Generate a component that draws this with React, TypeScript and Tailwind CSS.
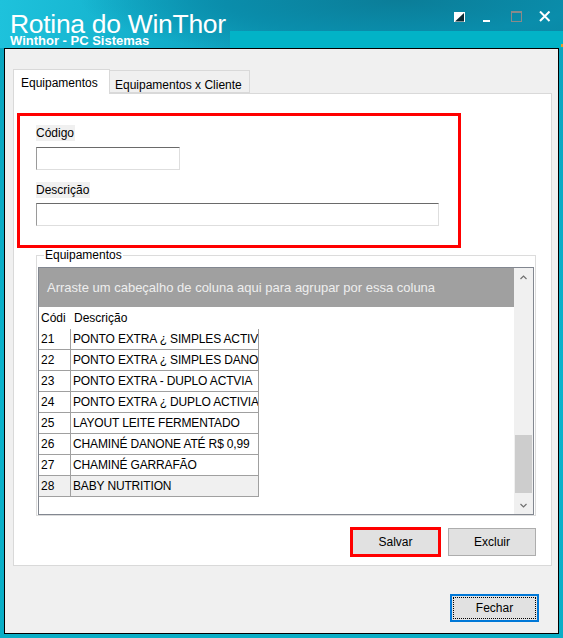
import React from "react";

const font = { fontFamily: '"Liberation Sans", Arial, sans-serif' };

const rows: [string, string][] = [
  ["21", "PONTO EXTRA ¿ SIMPLES ACTIVIA"],
  ["22", "PONTO EXTRA ¿ SIMPLES DANONE"],
  ["23", "PONTO EXTRA - DUPLO ACTVIA"],
  ["24", "PONTO EXTRA ¿ DUPLO ACTIVIA"],
  ["25", "LAYOUT LEITE FERMENTADO"],
  ["26", "CHAMINÉ DANONE ATÉ R$ 0,99"],
  ["27", "CHAMINÉ GARRAFÃO"],
  ["28", "BABY NUTRITION"],
];

function TitleIcons() {
  return (
    <div className="flex items-start h-[31px] pt-[11px] justify-end pr-[12px]">
      <svg width="12" height="11" viewBox="0 0 12 11" className="mt-[1px]">
        <rect x="0.5" y="0.5" width="10" height="9" fill="#ffffff" stroke="#ffffff" />
        <polygon points="10,1 10,9.5 1,9.5" fill="#0d2a33" />
      </svg>
      <svg width="8" height="11" viewBox="0 0 8 11" className="ml-[17px]">
        <rect x="0" y="9" width="7" height="2" fill="#ffffff" />
      </svg>
      <svg width="12" height="11" viewBox="0 0 12 11" className="ml-[20px]">
        <rect x="0.5" y="0.5" width="10" height="10" fill="none" stroke="#8a8a8a" />
        <rect x="0" y="0" width="11" height="2" fill="#8a8a8a" />
      </svg>
      <svg width="12" height="11" viewBox="0 0 12 11" className="ml-[16px]">
        <path d="M1 0.5 L10.5 10 M10.5 0.5 L1 10" stroke="#ffffff" strokeWidth="2" />
      </svg>
    </div>
  );
}

function Chevron({ up }: { up: boolean }) {
  return (
    <svg width="7" height="5" viewBox="0 0 7 5">
      <path d={up ? "M0.5 4 L3.5 1 L6.5 4" : "M0.5 1 L3.5 4 L6.5 1"} fill="none" stroke="#707070" strokeWidth="1.2" />
    </svg>
  );
}

export default function App() {
  return (
    <div
      className="w-[563px] h-[638px] overflow-hidden flex flex-col bg-[linear-gradient(180deg,#0aa3bd_0%,#0cb3cc_60%,#0aaec6_100%)] text-[12px] text-black"
      style={font}
    >
      {/* Title bar */}
      <div className="h-[48px] flex bg-[radial-gradient(ellipse_320px_60px_at_400px_0px,#0b7d98_0%,#0a8dab_55%,transparent_100%),linear-gradient(95deg,#1ec2dc_0%,#12adc9_30%,#0b93b0_60%,#0a86a2_100%)]">
        <div className="w-[230px] shrink-0 flex flex-col pl-[10px] text-white whitespace-nowrap">
          <div className="text-[26.5px] leading-[24px] mt-[12px] tracking-[-0.3px]">Rotina do WinThor</div>
          <div className="text-[13px] font-bold leading-[12px] -mt-[1px]">Winthor - PC Sistemas</div>
        </div>
        <div className="flex-1 flex flex-col">
          <TitleIcons />
          <div className="h-[17px] bg-[#02b3c7] flex justify-end">
            <div className="w-[2px] h-[3px] mt-[13px] bg-[#e89a2a]" />
          </div>
        </div>
      </div>

      {/* Window body */}
      <div className="mx-[4px] h-[586px] border border-black bg-[#f0f0f0] flex flex-col">
        <div className="pl-[8px] pt-[20px] flex flex-col">
          {/* Tabs */}
          <div className="flex items-end h-[24px]">
            <div className="relative z-10 h-[25px] -mb-px w-[97px] bg-white border border-b-0 border-[#d9d9d9] pl-[7px] pt-[4px] whitespace-nowrap">
              Equipamentos
            </div>
            <div className="h-[23px] w-[140px] bg-[#f0f0f0] border border-l-0 border-[#d9d9d9] pl-[5px] pt-[5px] whitespace-nowrap">
              Equipamentos x Cliente
            </div>
          </div>

          {/* Panel */}
          <div className="w-[539px] h-[473px] bg-white border border-[#d9d9d9] flex flex-col">
            {/* Red box */}
            <div className="ml-[3px] mt-[19px] w-[444px] h-[135px] border-[3px] border-[#ff0000] flex flex-col pl-[16px] pt-[9px]">
              <div className="h-[16px] self-start bg-[#f0f0f0] pr-[1px] leading-[16px]">Código</div>
              <div className="mt-[6px] w-[144px] h-[23px] border border-t-[#6a6a6a] border-l-[#9a9a9a] border-r-[#dedede] border-b-[#dedede] bg-white" />
              <div className="mt-[12px] h-[16px] self-start bg-[#f0f0f0] pr-[1px] leading-[16px]">Descrição</div>
              <div className="mt-[5px] w-[403px] h-[23px] border border-t-[#6a6a6a] border-l-[#9a9a9a] border-r-[#dedede] border-b-[#dedede] bg-white" />
            </div>

            {/* Group box */}
            <div className="relative ml-[22px] mt-[7px] w-[500px] h-[261px] border border-[#dcdcdc] pl-[1px] pt-[11px]">
              <span className="absolute -top-[8px] left-[7px] bg-white px-[1px] leading-[14px]">Equipamentos</span>
              {/* Grid */}
              <div className="w-[496px] h-[248px] border border-[#828790] flex bg-white">
                <div className="flex-1 flex flex-col">
                  <div className="h-[39px] bg-[#a0a0a0] text-[#eeeeee] text-[13px] flex items-center pl-[8px] pt-[1px] whitespace-nowrap">
                    Arraste um cabeçalho de coluna aqui para agrupar por essa coluna
                  </div>
                  <div className="h-[22px] flex items-center">
                    <div className="w-[31px] pl-[2px] overflow-hidden whitespace-nowrap">Códi</div>
                    <div className="pl-[4px]">Descrição</div>
                  </div>
                  <div className="flex flex-col">
                    {rows.map(([c, d], i) => (
                      <div
                        key={c}
                        className={`flex h-[21px] w-[220px] border-b border-[#a0a0a0] ${i === rows.length - 1 ? "bg-[#f0f0f0]" : ""}`}
                      >
                        <div className="w-[32px] border-r border-[#a0a0a0] pl-[2px] leading-[20px]">{c}</div>
                        <div className="w-[188px] border-r border-[#a0a0a0] pl-[2px] leading-[20px] overflow-hidden whitespace-nowrap tracking-[-0.15px]">{d}</div>
                      </div>
                    ))}
                  </div>
                </div>
                {/* Scrollbar */}
                <div className="w-[19px] bg-[#f0f0f0] flex flex-col">
                  <div className="h-[17px] flex items-center justify-center pt-[1px]">
                    <Chevron up />
                  </div>
                  <div className="h-[150px]" />
                  <div className="h-[58px] mx-[1px] bg-[#cdcdcd]" />
                  <div className="flex-1" />
                  <div className="h-[17px] flex items-center justify-center">
                    <Chevron up={false} />
                  </div>
                </div>
              </div>
            </div>

            {/* Buttons */}
            <div className="flex justify-end items-center pr-[15px] mt-[11px] gap-[7px]">
              <div className="w-[91px] h-[30px] border-[3px] border-[#ff0000] bg-[#e1e1e1] flex items-center justify-center">
                Salvar
              </div>
              <div className="w-[88px] h-[28px] border border-[#adadad] bg-[#e1e1e1] flex items-center justify-center">
                Excluir
              </div>
            </div>
          </div>
        </div>

        {/* Fechar */}
        <div className="flex justify-end pr-[19px] mt-[28px]">
          <div className="w-[89px] h-[28px] border-2 border-[#0078d7] bg-[#e1e1e1] p-px">
            <div className="w-full h-full border border-dotted border-black flex items-center justify-center">
              Fechar
            </div>
          </div>
        </div>
      </div>
    </div>
  );
}
